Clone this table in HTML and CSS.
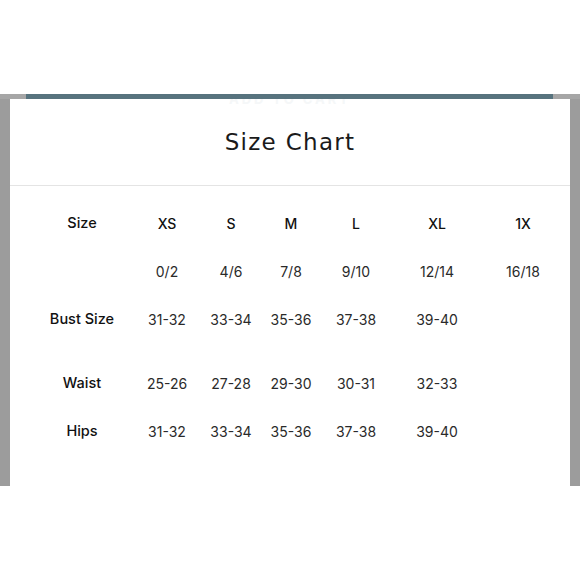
FILE: index.html
```html
<!DOCTYPE html>
<html>
<head>
<meta charset="utf-8">
<link rel="stylesheet" href="styles.css">
</head>
<body>
<div class="frame">
  <div class="strip"><div class="teal"></div></div>
  <div class="panel">
    <div class="ghost">ADD TO CART</div>
    <header class="head"><h1 class="title">Size Chart</h1></header>
    <div class="chart">
      <div class="row">
        <span class="lbl">Size</span><span class="hd">XS</span><span class="hd">S</span><span class="hd">M</span><span class="hd">L</span><span class="hd">XL</span><span class="hd">1X</span>
      </div>
      <div class="row">
        <span class="lbl"></span><span>0/2</span><span>4/6</span><span>7/8</span><span>9/10</span><span>12/14</span><span>16/18</span>
      </div>
      <div class="row">
        <span class="lbl">Bust Size</span><span>31-32</span><span>33-34</span><span>35-36</span><span>37-38</span><span>39-40</span><span></span>
      </div>
      <div class="row gap">
        <span class="lbl">Waist</span><span>25-26</span><span>27-28</span><span>29-30</span><span>30-31</span><span>32-33</span><span></span>
      </div>
      <div class="row">
        <span class="lbl">Hips</span><span>31-32</span><span>33-34</span><span>35-36</span><span>37-38</span><span>39-40</span><span></span>
      </div>
    </div>
  </div>
</div>
</body>
</html>
```
FILE: styles.css
```css
html, body {
  margin: 0;
  padding: 0;
  background: #ffffff;
}
body {
  width: 580px;
  height: 580px;
  overflow: hidden;
  font-family: Inter, "Noto Sans", sans-serif;
  color: #1c1c1c;
}
.frame {
  margin-top: 94px;
  background: #9c9c9c;
  padding: 0 10px;
  height: 392px;
  display: flex;
  flex-direction: column;
}
.strip {
  height: 5px;
  background: #a6a6a6;
  margin: 0 -10px;
  padding: 0 27px 0 26px;
}
.teal {
  height: 5px;
  background: #57737e;
}
.panel {
  flex: 1;
  background: #ffffff;
  position: relative;
  overflow: hidden;
}
.ghost {
  position: absolute;
  top: -6px;
  left: 0;
  right: 0;
  text-align: center;
  font-size: 13px;
  line-height: 13px;
  font-weight: 700;
  letter-spacing: 3px;
  color: #f5f7f8;
}
.head {
  height: 86px;
  display: flex;
  align-items: center;
  justify-content: center;
  border-bottom: 1px solid #e4e4e4;
}
.title {
  margin: 0;
  font-family: "DejaVu Sans", sans-serif;
  font-weight: 400;
  font-size: 23px;
  letter-spacing: 1.3px;
  color: #1a1a1a;
}
.chart {
  padding: 13px 0 0 30px;
}
.row {
  display: grid;
  grid-template-columns: 84px 86px 42px 78px 52px 110px 62px;
  height: 48px;
  align-items: center;
  font-size: 14px;
}
.row span {
  text-align: center;
  white-space: nowrap;
  color: #2a2a2a;
}
.row.gap {
  margin-top: 16px;
}
.row .lbl,
.row .hd {
  font-weight: 500;
  color: #111111;
}
.row .lbl {
  font-size: 14.5px;
  margin-top: -2px;
}
```
